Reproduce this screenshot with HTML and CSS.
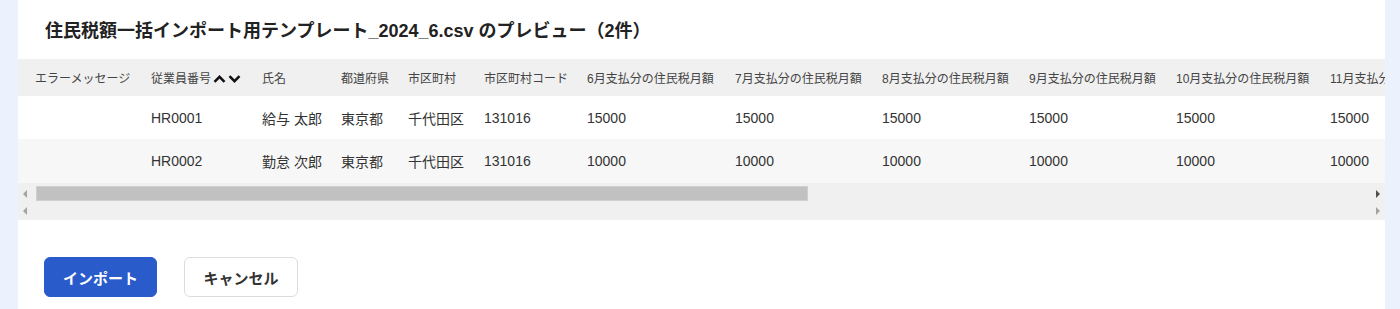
FILE: index.html
```html
<!DOCTYPE html>
<html lang="ja">

<head>
  <meta charset="UTF-8">
  <title>住民税額インポート</title>
  <link rel="stylesheet" href="styles.css">
</head>

<body>
  <div class="page">
    <div class="side"></div>

    <div class="panel">
      <h3 class="title">住民税額一括インポート用テンプレート_2024_6.csv のプレビュー（2件）</h3>

      <div class="tableWrap">
        <table class="preview">
          <colgroup>
            <col style="width:116px">
            <col style="width:111px">
            <col style="width:79px">
            <col style="width:67px">
            <col style="width:76px">
            <col style="width:103px">
            <col style="width:148px">
            <col style="width:147px">
            <col style="width:147px">
            <col style="width:147px">
            <col style="width:154px">
            <col style="width:154px">
          </colgroup>
          <thead>
            <tr>
              <th>エラーメッセージ</th>
              <th>従業員番号<span class="sort">
                  <svg width="13" height="10" viewBox="0 0 13 10"><path d="M1.5 7.8 6.5 2.8l5 5" fill="none" stroke="#111" stroke-width="2.5"/></svg><svg width="13" height="10" viewBox="0 0 13 10"><path d="M1.5 2.2 6.5 7.2l5-5" fill="none" stroke="#111" stroke-width="2.5"/></svg>
                </span></th>
              <th>氏名</th>
              <th>都道府県</th>
              <th>市区町村</th>
              <th>市区町村コード</th>
              <th>6月支払分の住民税月額</th>
              <th>7月支払分の住民税月額</th>
              <th>8月支払分の住民税月額</th>
              <th>9月支払分の住民税月額</th>
              <th>10月支払分の住民税月額</th>
              <th>11月支払分の住民税月額</th>
            </tr>
          </thead>
          <tbody>
            <tr>
              <td></td>
              <td>HR0001</td>
              <td>給与 太郎</td>
              <td>東京都</td>
              <td>千代田区</td>
              <td>131016</td>
              <td>15000</td>
              <td>15000</td>
              <td>15000</td>
              <td>15000</td>
              <td>15000</td>
              <td>15000</td>
            </tr>
            <tr>
              <td></td>
              <td>HR0002</td>
              <td>勤怠 次郎</td>
              <td>東京都</td>
              <td>千代田区</td>
              <td>131016</td>
              <td>10000</td>
              <td>10000</td>
              <td>10000</td>
              <td>10000</td>
              <td>10000</td>
              <td>10000</td>
            </tr>
          </tbody>
        </table>
      </div>

      <div class="scrollbar">
        <div class="scrollRow">
          <span class="arrow left"></span>
          <div class="track"><div class="thumb"></div></div>
          <span class="arrow right dark"></span>
        </div>
        <div class="scrollRow">
          <span class="arrow left"></span>
          <div class="track"></div>
          <span class="arrow right"></span>
        </div>
      </div>

      <div class="actions">
        <button class="btn primary">インポート</button>
        <button class="btn">キャンセル</button>
      </div>
    </div>

    <div class="side right"></div>
  </div>
</body>

</html>
```

FILE: styles.css
```css
* {
  margin: 0;
  padding: 0;
  box-sizing: border-box;
}

body {
  font-family: "Liberation Sans", "Noto Sans CJK JP", sans-serif;
  color: #333;
  background: #ebf2fd;
}

.page {
  display: flex;
  width: 100%;
  height: 100vh;
  overflow: hidden;
}

.side {
  width: 18px;
  flex-shrink: 0;
  background: #ebf2fd;
}

.side.right {
  width: 15px;
}

.panel {
  flex: 1;
  min-width: 0;
  overflow: hidden;
  background: #fff;
}

.title {
  font-size: 18px;
  font-weight: bold;
  color: #222;
  padding: 19px 0 0 27px;
  height: 59px;
  line-height: 24px;
}

.tableWrap {
  width: 100%;
  overflow: hidden;
}

.preview {
  table-layout: fixed;
  border-collapse: collapse;
  width: 1449px;
}

.preview th,
.preview td {
  text-align: left;
  white-space: nowrap;
  padding: 0 0 0 17px;
  overflow: hidden;
}

.preview th {
  height: 37px;
  font-size: 12px;
  font-weight: normal;
  color: #444;
  background: #f0f0f0;
}

.preview td {
  font-size: 14px;
  color: #333;
}

.preview tbody tr:nth-child(1) td {
  height: 43px;
  background: #fff;
}

.preview tbody tr:nth-child(2) td {
  height: 44px;
  background: #f7f7f7;
}

.sort {
  display: inline-flex;
  vertical-align: -1px;
  margin-left: 2px;
  gap: 2px;
}

.scrollbar {
  background: #f0f0f0;
  height: 37px;
  padding-top: 2px;
}

.scrollRow {
  display: flex;
  align-items: center;
  height: 17px;
}

.track {
  flex: 1;
  height: 15px;
  margin: 0 4px;
}

.thumb {
  width: 772px;
  height: 15px;
  background: #c1c1c1;
  border: 1px solid #cfcfcf;
}

.arrow {
  width: 0;
  height: 0;
  border-top: 4px solid transparent;
  border-bottom: 4px solid transparent;
  margin: 0 5px;
}

.arrow.left {
  border-right: 4px solid #a3a3a3;
}

.arrow.right {
  border-left: 4px solid #a3a3a3;
}

.arrow.right.dark {
  border-left-color: #505050;
}

.actions {
  display: flex;
  gap: 27px;
  padding: 37px 0 0 26px;
}

.btn {
  font-family: "Noto Sans CJK JP", sans-serif;
  font-size: 15px;
  font-weight: bold;
  color: #333;
  background: #fff;
  border: 1px solid #dcdcdc;
  border-radius: 6px;
  height: 40px;
  width: 114px;
}

.btn.primary {
  background: #2a5bcb;
  border-color: #2a5bcb;
  color: #fff;
  width: 113px;
}
```
